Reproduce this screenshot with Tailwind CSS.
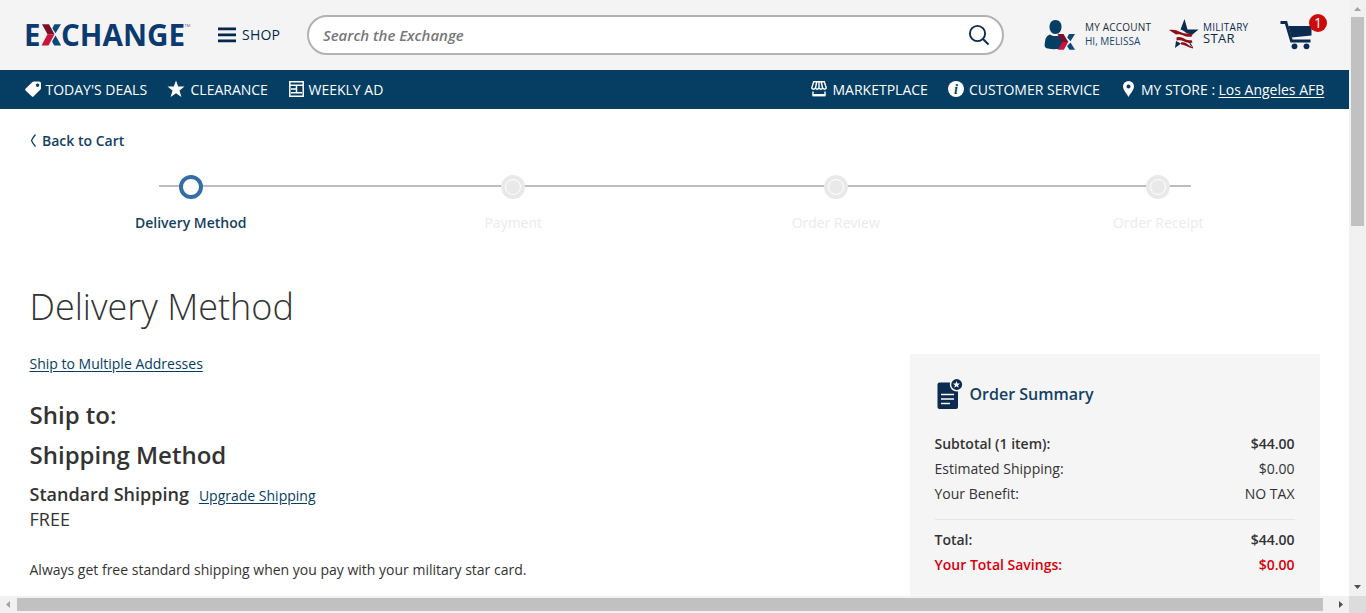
<!DOCTYPE html>
<html lang="en">
<head>
<meta charset="utf-8">
<title>Delivery Method</title>
<script src="https://cdn.jsdelivr.net/npm/@tailwindcss/browser@4"></script>
</head>
<body class="h-[613px] w-[1366px] overflow-hidden bg-white font-['Open_Sans','Noto_Sans',sans-serif] text-sm text-[#333]">
<div class="grid h-[613px] grid-cols-[1349px_17px] grid-rows-[596px_17px]">
  <div class="overflow-hidden">
    <header class="flex h-[70px] items-center bg-[#f4f4f4] text-[#00284f]">
      <svg class="ml-5 h-[46px] w-[172px] shrink-0" viewBox="20 12 172 46">
        <g fill="#0b3a70" font-family="Open Sans" font-weight="700" font-size="29.5">
          <text x="24" y="45.500" textLength="16.500" lengthAdjust="spacingAndGlyphs">E</text>
          <text x="61" y="45.500" textLength="124" lengthAdjust="spacingAndGlyphs">CHANGE</text>
        </g>
        <path d="M42 24.300h7l5.500 10h-7z" fill="#7a1028"/><path d="M47.500 34.300h7l-6 11.200h-7z" fill="#c8143c"/>
        <path d="M54.500 24.300h6.500l-5.500 9-3.200-5zM55.500 35.500l5.700 10h-7l-2.200-4z" fill="#0b4a78"/>
        <text x="184.500" y="27" font-family="Open Sans" font-size="4" fill="#567">TM</text>
      </svg>
      <div class="ml-[26px] flex w-[63px] items-center gap-[6px]">
        <svg class="h-4 w-[18px] shrink-0" viewBox="0 0 18 16" fill="#00284f"><path d="M0 .5h18v2.700H0zM0 6.500h18v2.700H0zM0 12.500h18v2.700H0z"/></svg>
        <span class="tracking-[0.2px]">SHOP</span>
      </div>
      <div class="ml-[26px] flex h-10 w-[697px] items-center justify-between rounded-full border-2 border-[#b2b2b2] bg-white pr-[12px] pl-[14px]">
        <span class="pt-px text-[15px] font-semibold tracking-[-0.03px] text-[#777] italic">Search the Exchange</span>
        <svg class="h-[22px] w-[22px]" viewBox="0 0 22 22" fill="none" stroke="#0b2b50" stroke-width="1.900"><circle cx="9.500" cy="9.500" r="7.600"/><path d="m15 15 5.500 5.500"/></svg>
      </div>
      <svg class="ml-10 h-8 w-8 shrink-0" viewBox="1044 19 32 32">
        <path d="M1055.500 20c4 0 6 3 6 7 0 3.500-2 7-6 7s-6-3.500-6-7c0-4 2-7 6-7zM1050 34.500c3 2 8 2 11 0l1.500 1.500 4 5.500-4.500 6.500c-4 1.500-10 1.500-14 .5-4-.8-3.500-3-3-7 .5-4 2-6 5-7z" fill="#053d63"/>
        <path d="M1062.300 41.800h6l-4.500 8h-6z" fill="#c8143c"/><path d="M1057.500 34h6l4.800 8h-6z" fill="#7a1028"/>
        <path d="M1069 34h6l-4.500 7.300-3.300-3.800zM1070.500 42.500l4.500 7.300h-5.500l-2.500-3.800z" fill="#0b4a78"/>
      </svg>
      <div class="ml-[9px] flex w-[75px] flex-col pb-[2px] text-[10px] leading-[14px] whitespace-nowrap"><span class="tracking-[0.2px] text-[#222c3a]">MY ACCOUNT</span><span class="text-[#16476d]">HI, MELISSA</span></div>
      <svg class="mb-[2px] ml-[9px] h-[30px] w-[30px] shrink-0" viewBox="0 0 30 30">
        <path d="m15.500 0 3 10.500h11l-6 5c-6 0-8-4-12-5zM7 22l5 2.500-6 4.500zM20 22l4 6-3-2z" fill="#0b2b50"/>
        <path d="M0 11c10-1.500 10 4 20 3.500l3.500 1-1 2.200c-8 1-9-3.500-15.500-2.200zM7.500 18.500c7-2 8 4 15 2.500l1 2.800c-7 1-9-4-16-2.300zM12 23.500c5-1.500 7 3.500 12 4.500v1.500c-5-1-7-3.500-12-4z" fill="#8b1117"/>
      </svg>
      <div class="ml-[4px] flex w-[60px] flex-col pb-[4px] text-[#0b2b50]"><span class="h-[11px] text-[10px] leading-[11px] tracking-[0.25px]">MILITARY</span><span class="h-[11px] text-[13px] leading-[11px] tracking-[0.3px]">STAR</span></div>
      <svg class="ml-[17px] h-[44px] w-[50px] shrink-0" viewBox="1280 13 50 44">
        <path d="M1280.500 22.500h5.500l5.500 18.500h19" fill="none" stroke="#0b2b50" stroke-width="2.800"/>
        <path d="M1288.500 26h23v9.500l-20 2z" fill="#0b2b50"/>
        <circle cx="1294.500" cy="46.300" r="2.900" fill="#0b2b50"/><circle cx="1306.500" cy="46.300" r="2.900" fill="#0b2b50"/>
        <circle cx="1318" cy="23" r="9" fill="#cc0a0a"/>
        <text x="1318" y="28" text-anchor="middle" font-family="Open Sans" font-size="14" fill="#fff">1</text>
      </svg>
    </header>

    <nav class="flex h-[39px] items-center bg-[#053d63] text-white">
      <svg class="mb-[2px] ml-6 h-[18px] w-[18px]" viewBox="0 0 18 18" fill="#fff"><path fill-rule="evenodd" d="M10 1.500h5q2 0 2 2v4.500q0 1-.8 1.800l-6.500 6.500q-1 1-2 0l-6-5.500q-1.200-1 0-2.200l6.500-6.300q.8-.8 1.800-.8zM13.600 3.500a1.700 1.700 0 1 0 .01 0z"/></svg>
      <span class="ml-[3.500px] w-[101.500px] whitespace-nowrap">TODAY'S DEALS</span>
      <svg class="mb-px ml-5 h-[18px] w-[18px]" viewBox="0 0 18 18" fill="#fff"><path d="m9 .5 2.200 6h6.300l-5 4 1.900 6.500L9 13.200 3.600 17l1.900-6.500-5-4h6.300z"/></svg>
      <span class="ml-[5.500px] w-[77.500px] whitespace-nowrap">CLEARANCE</span>
      <svg class="mb-px ml-[21px] h-4 w-[15px]" viewBox="0 0 15 16" fill="none" stroke="#fff" stroke-width="1.500"><path d="M.8.8h13.400v14.400H.8zM1 4.200h13M2 8h5M2 11.700h11M7.500 4.500v7"/></svg>
      <span class="ml-[4.500px] w-[75.500px] whitespace-nowrap">WEEKLY AD</span>
      <svg class="mb-px ml-[427px] h-4 w-4" viewBox="0 0 16 16" fill="none" stroke="#fff" stroke-width="1.400"><path d="M2.700.8h10.600L15.300 7q-1.800 2.400-3.600 0-1.800 2.400-3.700 0-1.900 2.400-3.700 0Q2.500 9.400.7 7zM5.700 1 4.500 7M8 1v6M10.300 1l1.200 6M2 10.500v4M14 10.500v4"/><path d="M1.500 14.200h13" stroke-width="2.400"/></svg>
      <span class="ml-[5.500px] w-[95.500px] whitespace-nowrap">MARKETPLACE</span>
      <svg class="mb-px ml-5 h-4 w-4" viewBox="0 0 16 16"><circle cx="8" cy="8" r="8" fill="#fff"/><text x="8" y="12.500" text-anchor="middle" font-family="Liberation Serif" font-weight="700" font-style="italic" font-size="14" fill="#053d63">i</text></svg>
      <span class="ml-[5px] w-[131px] whitespace-nowrap">CUSTOMER SERVICE</span>
      <svg class="mb-px ml-[23px] h-4 w-[11px]" viewBox="0 0 11 16" fill="#fff"><path fill-rule="evenodd" d="M5.500 0A5.500 5.500 0 0 1 11 5.500C11 9 7 13 5.500 16 4 13 0 9 0 5.500A5.500 5.500 0 0 1 5.500 0zm0 3.500a2 2 0 1 0 .01 0z"/></svg>
      <span class="ml-[7px] w-[77.500px] whitespace-nowrap">MY STORE :</span>
      <a class="whitespace-nowrap underline underline-offset-2">Los Angeles AFB</a>
    </nav>

    <main>
      <div class="flex h-[66px] items-center pb-[3px] pl-[30px] font-semibold text-[#143f63]">
        <svg class="mr-[5px] h-[13px] w-[7px]" viewBox="0 0 7 13" fill="none" stroke="#053d63" stroke-width="1.200"><path d="M5.500.5Q2.500 4 1.500 6.500q1 2.500 4 6"/></svg>
        <span>Back to Cart</span>
      </div>
      <div class="ml-[29.500px] grid h-[60px] w-[1290px] grid-cols-4 bg-[linear-gradient(#bdbdbd,#bdbdbd)] bg-[length:1032px_2px] bg-[position:129px_10px] bg-no-repeat text-[#ebebeb]">
        <div class="flex flex-col items-center text-[#143f63]"><span class="size-6 rounded-full border-4 border-[#336fa5] bg-white"></span><span class="mt-[14px] leading-5 font-semibold">Delivery Method</span></div>
        <div class="flex flex-col items-center"><span class="flex size-6 items-center justify-center rounded-full bg-[#e9e9e9]"><span class="size-4 rounded-full border border-white"></span></span><span class="mt-[14px] leading-5">Payment</span></div>
        <div class="flex flex-col items-center"><span class="flex size-6 items-center justify-center rounded-full bg-[#e9e9e9]"><span class="size-4 rounded-full border border-white"></span></span><span class="mt-[14px] leading-5">Order Review</span></div>
        <div class="flex flex-col items-center"><span class="flex size-6 items-center justify-center rounded-full bg-[#e9e9e9]"><span class="size-4 rounded-full border border-white"></span></span><span class="mt-[14px] leading-5">Order Receipt</span></div>
      </div>
      <h1 class="mt-[47px] h-[50px] pl-[29.500px] text-[36px] leading-[50px] font-light">Delivery Method</h1>
      <div class="mt-[22px] flex justify-between pr-[29px] pl-[29.500px]">
        <section>
          <a class="block leading-5 text-[#053d63] underline underline-offset-2">Ship to Multiple Addresses</a>
          <h2 class="mt-[21px] text-2xl leading-10 font-semibold">Ship to:</h2>
          <h2 class="text-2xl leading-10 font-semibold">Shipping Method</h2>
          <div class="mt-[6px] flex h-[27px] items-start gap-[10px]"><span class="text-lg leading-[26px] font-semibold">Standard Shipping</span><a class="pt-[2px] leading-[26px] text-[#053d63] underline underline-offset-2">Upgrade Shipping</a></div>
          <div class="h-6 pt-px text-[18px] leading-[20px]">FREE</div>
          <p class="mt-[28px] leading-5">Always get free standard shipping when you pay with your military star card.</p>
        </section>
        <aside class="h-[260px] w-[410px] bg-[#f5f5f5] pr-[25.500px] pl-[24.500px]">
          <div class="flex h-[77px] items-center gap-[7px] pt-[2px] text-base font-semibold text-[#143f63]">
            <svg class="h-8 w-7" viewBox="935 378 28 32"><rect x="937.500" y="382.500" width="20.500" height="26.500" rx="2" fill="#0b2b50"/><path d="M941 394.500h13M941 399h13M941 403.500h9" stroke="#fff" stroke-width="1.500"/><circle cx="956.700" cy="384.500" r="6.200" fill="#0b2b50" stroke="#f5f5f5" stroke-width="1.500"/><path d="m956.500 381 1 2.500h2.500l-2 1.700.8 2.500-2.300-1.400-2.300 1.400.8-2.500-2-1.700h2.500z" fill="#fff"/></svg>
            <span>Order Summary</span>
          </div>
          <div class="flex justify-between leading-[25px] font-semibold"><span>Subtotal (1 item):</span><span>$44.00</span></div>
          <div class="flex justify-between leading-[25px]"><span>Estimated Shipping:</span><span>$0.00</span></div>
          <div class="flex justify-between leading-[25px]"><span>Your Benefit:</span><span>NO TAX</span></div>
          <div class="mt-[13px] mb-[7px] h-px bg-[#e6e6e6]"></div>
          <div class="flex justify-between leading-[25px] font-semibold"><span>Total:</span><span>$44.00</span></div>
          <div class="flex justify-between leading-[25px] font-semibold text-[#d5000b]"><span>Your Total Savings:</span><span>$0.00</span></div>
        </aside>
      </div>
    </main>
  </div>
  <div class="flex flex-col items-center justify-between bg-[#f1f1f1]">
    <div class="flex flex-col items-center"><svg class="h-[17px] w-[17px]" viewBox="0 0 17 17"><path d="M5 11h7L8.500 7z" fill="#a3a3a3"/></svg><div class="h-[209px] w-[13px] bg-[#c1c1c1]"></div></div>
    <svg class="h-[17px] w-[17px]" viewBox="0 0 17 17"><path d="M5 6h7l-3.500 4z" fill="#505050"/></svg>
  </div>
  <div class="flex items-center bg-[#f1f1f1]">
    <svg class="h-[17px] w-[17px]" viewBox="0 0 17 17"><path d="M10 5v7L6 8.500z" fill="#a3a3a3"/></svg>
    <div class="h-[13px] w-[1306px] bg-[#c1c1c1]"></div>
    <svg class="ml-[9px] h-[17px] w-[17px]" viewBox="0 0 17 17"><path d="M7 5v7l4-3.500z" fill="#505050"/></svg>
  </div>
  <div class="bg-[#dcdcdc]"></div>
</div>
</body>
</html>
